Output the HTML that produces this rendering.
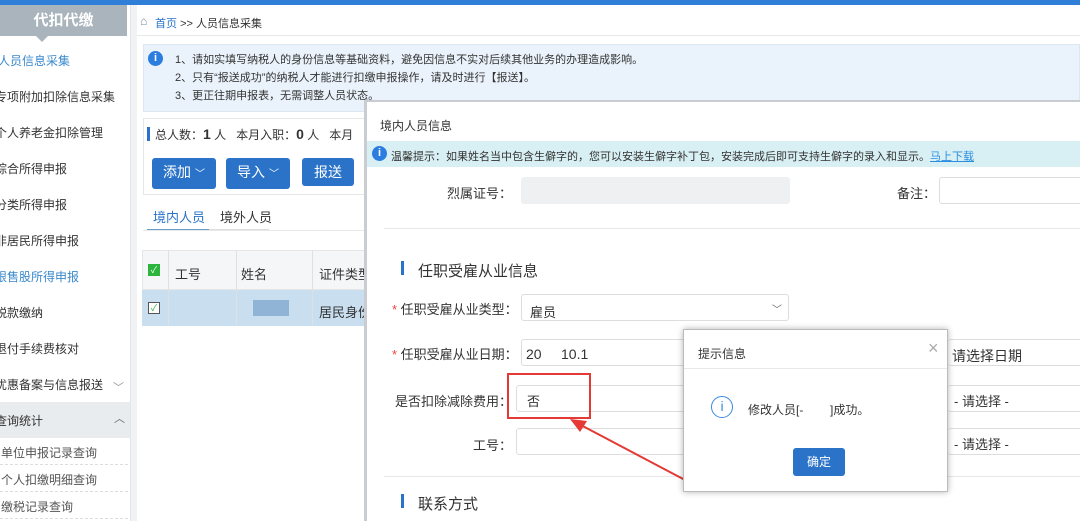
<!DOCTYPE html>
<html><head><meta charset="utf-8"><style>
*{margin:0;padding:0;box-sizing:border-box}
body{width:1080px;height:521px;overflow:hidden;position:relative;background:#fff;font-family:"Liberation Sans","Noto Sans CJK SC",sans-serif;color:#333;font-size:13px}
.a{position:absolute}
.side div.it{position:absolute;left:0;font-size:12px;color:#333;white-space:nowrap}
.btn{position:absolute;background:#2a73c9;color:#fff;border-radius:3px;font-size:14px;text-align:center;line-height:28px}
.inp{position:absolute;border:1px solid #ddd;border-radius:3px;background:#fff}
.lbl{position:absolute;font-size:13px;color:#333;text-align:right;white-space:nowrap}
</style></head><body>
<div class="a" style="left:0;top:0;width:1080px;height:5px;background:#2f7fd8"></div>
<!-- sidebar -->
<div class="a side" style="left:0;top:5px;width:131px;height:516px;background:#fff;border-right:1px solid #e3e6ea">
<div class="a" style="left:0;top:0;width:127px;height:31px;background:#a9b4bc;color:#fff;font-size:15px;text-align:center;line-height:31px;font-weight:bold">代扣代缴</div>
<div class="a" style="left:36px;top:31px;width:0;height:0;border-left:6px solid transparent;border-right:6px solid transparent;border-top:6px solid #a9b4bc"></div>
<div class="it" style="top:47px;left:-2px;color:#3a88cc">人员信息采集</div>
<div class="it" style="top:83px;left:-5px">专项附加扣除信息采集</div>
<div class="it" style="top:119px;left:-5px">个人养老金扣除管理</div>
<div class="it" style="top:155px;left:-5px">综合所得申报</div>
<div class="it" style="top:191px;left:-5px">分类所得申报</div>
<div class="it" style="top:227px;left:-5px">非居民所得申报</div>
<div class="it" style="top:263px;left:-5px;color:#3a88cc">限售股所得申报</div>
<div class="it" style="top:299px;left:-5px">税款缴纳</div>
<div class="it" style="top:335px;left:-5px">退付手续费核对</div>
<div class="it" style="top:371px;left:-5px">优惠备案与信息报送</div>
<div class="it" style="top:374px;left:113px;color:#999;font-size:11px">﹀</div>
<div class="a" style="left:0;top:397px;width:130px;height:36px;background:#e9ecef"></div>
<div class="it" style="top:407px;left:-5px">查询统计</div>
<div class="it" style="top:405px;left:114px;color:#666;font-size:11px">︿</div>
<div class="it" style="top:439px;left:1px;color:#555">单位申报记录查询</div>
<div class="a" style="left:0;top:459px;width:128px;border-top:1px dashed #ddd"></div>
<div class="it" style="top:466px;left:1px;color:#555">个人扣缴明细查询</div>
<div class="a" style="left:0;top:486px;width:128px;border-top:1px dashed #ddd"></div>
<div class="it" style="top:493px;left:1px;color:#555">缴税记录查询</div>
<div class="a" style="left:0;top:513px;width:128px;border-top:1px dashed #ddd"></div>
</div>
<div class="a" style="left:131px;top:5px;width:6px;height:516px;background:#f0f2f4"></div>
<!-- main -->
<div class="a" style="left:137px;top:5px;width:943px;height:31px;border-bottom:1px solid #e8e8e8"></div>
<div class="a" style="left:140px;top:14px;font-size:12px;color:#7a8a9a">⌂</div>
<div class="a" style="left:155px;top:15px;font-size:11px;color:#2a73c9">首页 <span style="color:#333">&gt;&gt; 人员信息采集</span></div>
<div class="a" style="left:143px;top:44px;width:937px;height:68px;background:#eaf3fb;border:1px solid #dbe8f3"></div>
<div class="a" style="left:148px;top:51px;width:15px;height:15px;border-radius:50%;background:#2b7de0;color:#fff;font-size:11px;text-align:center;line-height:15px;font-weight:bold">i</div>
<div class="a" style="left:175px;top:51px;font-size:11px;line-height:18px;color:#333">1、请如实填写纳税人的身份信息等基础资料，避免因信息不实对后续其他业务的办理造成影响。<br>2、只有“报送成功”的纳税人才能进行扣缴申报操作，请及时进行【报送】。<br>3、更正往期申报表，无需调整人员状态。</div>
<div class="a" style="left:143px;top:118px;width:230px;height:77px;border:1px solid #e6e6e6"></div>
<div class="a" style="left:147px;top:127px;width:3px;height:14px;background:#2a73c9"></div>
<div class="a" style="left:155px;top:126px;font-size:12px;white-space:nowrap">总人数：<b style="font-size:14px">1</b> 人 &nbsp;&nbsp;本月入职：<b style="font-size:14px">0</b> 人 &nbsp;&nbsp;本月</div>
<div class="btn" style="left:152px;top:158px;width:64px">添加 <span style="font-size:10px">﹀</span></div>
<div class="btn" style="left:226px;top:158px;width:64px">导入 <span style="font-size:10px">﹀</span></div>
<div class="btn" style="left:302px;top:158px;width:52px">报送</div>
<div class="a" style="left:153px;top:207px;font-size:13px;color:#2a73c9">境内人员</div>
<div class="a" style="left:147px;top:229px;width:62px;height:2px;background:#6a9ccc"></div>
<div class="a" style="left:220px;top:207px;font-size:13px">境外人员</div>
<div class="a" style="left:209px;top:229px;width:60px;height:2px;background:#ddd"></div>
<div class="a" style="left:143px;top:230px;width:230px;border-top:1px solid #e8e8e8"></div>
<div class="a" style="left:142px;top:250px;width:225px;height:40px;background:#f5f6f7;border:1px solid #e6e6e6"></div>
<div class="a" style="left:142px;top:290px;width:225px;height:36px;background:#c9dff0"></div>
<div class="a" style="left:168px;top:250px;height:76px;border-left:1px solid #e0e0e0"></div>
<div class="a" style="left:236px;top:250px;height:76px;border-left:1px solid #e0e0e0"></div>
<div class="a" style="left:312px;top:250px;height:76px;border-left:1px solid #e0e0e0"></div>
<div class="a" style="left:148px;top:264px;width:12px;height:12px;background:#2cb53c;color:#fff;font-size:9px;text-align:center;line-height:12px">✓</div>
<div class="a" style="left:148px;top:302px;width:12px;height:12px;border:1px solid #555;background:#fff;color:#2cb53c;font-size:9px;text-align:center;line-height:10px">✓</div>
<div class="a" style="left:175px;top:264px;font-size:13px">工号</div>
<div class="a" style="left:241px;top:264px;font-size:13px">姓名</div>
<div class="a" style="left:319px;top:264px;font-size:13px">证件类型</div>
<div class="a" style="left:253px;top:300px;width:36px;height:16px;background:#8fb4d6"></div>
<div class="a" style="left:319px;top:302px;font-size:13px">居民身份</div>
<!-- modal -->
<div class="a" style="left:364px;top:100px;width:716px;height:421px;background:#fff;border-left:3px solid #c9cdd2;border-top:2px solid #c9cdd2"></div>
<div class="a" style="left:380px;top:117px;font-size:12px">境内人员信息</div>
<div class="a" style="left:367px;top:141px;width:713px;height:26px;background:#d8eff4"></div>
<div class="a" style="left:372px;top:146px;width:15px;height:15px;border-radius:50%;background:#2b7de0;color:#fff;font-size:11px;text-align:center;line-height:15px;font-weight:bold">i</div>
<div class="a" style="left:391px;top:148px;font-size:11px;white-space:nowrap">温馨提示：如果姓名当中包含生僻字的，您可以安装生僻字补丁包，安装完成后即可支持生僻字的录入和显示。<span style="color:#2a8ee0;text-decoration:underline">马上下载</span></div>
<div class="lbl" style="left:440px;top:183px;width:72px">烈属证号：</div>
<div class="a" style="left:521px;top:177px;width:269px;height:27px;background:#eef0f2;border-radius:3px"></div>
<div class="lbl" style="left:880px;top:183px;width:56px">备注：</div>
<div class="inp" style="left:939px;top:177px;width:150px;height:27px"></div>
<div class="a" style="left:384px;top:228px;width:696px;border-top:1px solid #e8e8e8"></div>
<div class="a" style="left:401px;top:261px;width:3px;height:14px;background:#2a73c9"></div>
<div class="a" style="left:418px;top:260px;font-size:15px">任职受雇从业信息</div>
<div class="lbl" style="left:392px;top:299px;width:120px"><span style="color:#e44">*</span> 任职受雇从业类型：</div>
<div class="inp" style="left:521px;top:294px;width:268px;height:27px;padding:7px 8px;font-size:13px">雇员<span style="position:absolute;right:6px;top:6px;font-size:10px;color:#666">﹀</span></div>
<div class="lbl" style="left:392px;top:344px;width:120px"><span style="color:#e44">*</span> 任职受雇从业日期：</div>
<div class="inp" style="left:521px;top:339px;width:170px;height:27px;padding:6px 4px;font-size:14px">20&nbsp;&nbsp;&nbsp;&nbsp;&nbsp;10.1</div>
<div class="inp" style="left:948px;top:339px;width:140px;height:27px;padding:6px 4px;font-size:14px;border-left:none">请选择日期</div>
<div class="lbl" style="left:392px;top:391px;width:120px">是否扣除减除费用：</div>
<div class="inp" style="left:516px;top:385px;width:175px;height:27px;padding:5px 10px;font-size:13px">否</div>
<div class="a" style="left:507px;top:373px;width:84px;height:46px;border:2px solid #e53935"></div>
<div class="inp" style="left:948px;top:385px;width:140px;height:27px;padding:5px 6px;font-size:13px;border-left:none">- 请选择 -</div>
<div class="lbl" style="left:440px;top:435px;width:72px">工号：</div>
<div class="inp" style="left:516px;top:428px;width:175px;height:27px"></div>
<div class="inp" style="left:948px;top:428px;width:140px;height:27px;padding:5px 6px;font-size:13px;border-left:none">- 请选择 -</div>
<div class="a" style="left:384px;top:476px;width:696px;border-top:1px solid #e8e8e8"></div>
<div class="a" style="left:401px;top:494px;width:3px;height:14px;background:#2a73c9"></div>
<div class="a" style="left:418px;top:493px;font-size:15px">联系方式</div>
<!-- arrow -->
<svg class="a" style="left:565px;top:415px" width="130" height="70"><line x1="120" y1="65" x2="12" y2="8" stroke="#e53935" stroke-width="2"/><polygon points="5,4 22,6 15,17" fill="#e53935"/></svg>
<!-- dialog -->
<div class="a" style="left:683px;top:329px;width:265px;height:163px;background:#fff;border:1px solid #bbb;box-shadow:0 0 6px rgba(0,0,0,.3)"></div>
<div class="a" style="left:698px;top:345px;font-size:12px">提示信息</div>
<div class="a" style="left:928px;top:338px;font-size:18px;color:#aaa">×</div>
<div class="a" style="left:684px;top:368px;width:263px;border-top:1px solid #e8e8e8"></div>
<div class="a" style="left:711px;top:396px;width:22px;height:22px;border-radius:50%;border:1.5px solid #3a8ae0;color:#3a8ae0;font-size:14px;text-align:center;line-height:19px">i</div>
<div class="a" style="left:748px;top:401px;font-size:12px;white-space:nowrap">修改人员[-&nbsp;&nbsp;&nbsp;&nbsp;&nbsp;&nbsp;&nbsp;&nbsp;]成功。</div>
<div class="a" style="left:793px;top:448px;width:52px;height:28px;background:#2a73c9;color:#fff;border-radius:3px;font-size:12px;text-align:center;line-height:28px">确定</div>
</body></html>
